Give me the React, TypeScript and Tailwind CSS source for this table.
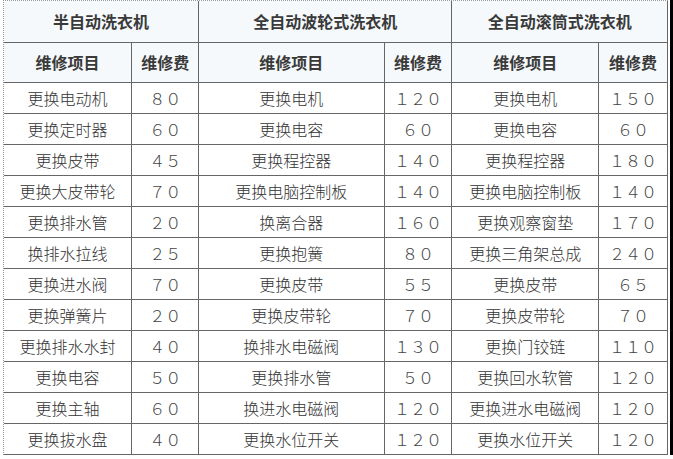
const groups = [
  {
    title: "半自动洗衣机",
    rows: [
      ["更换电动机", "８０"],
      ["更换定时器", "６０"],
      ["更换皮带", "４５"],
      ["更换大皮带轮", "７０"],
      ["更换排水管", "２０"],
      ["换排水拉线", "２５"],
      ["更换进水阀", "７０"],
      ["更换弹簧片", "２０"],
      ["更换排水水封", "４０"],
      ["更换电容", "５０"],
      ["更换主轴", "６０"],
      ["更换拔水盘", "４０"],
    ],
  },
  {
    title: "全自动波轮式洗衣机",
    rows: [
      ["更换电机", "１２０"],
      ["更换电容", "６０"],
      ["更换程控器", "１４０"],
      ["更换电脑控制板", "１４０"],
      ["换离合器", "１６０"],
      ["更换抱簧", "８０"],
      ["更换皮带", "５５"],
      ["更换皮带轮", "７０"],
      ["换排水电磁阀", "１３０"],
      ["更换排水管", "５０"],
      ["换进水电磁阀", "１２０"],
      ["更换水位开关", "１２０"],
    ],
  },
  {
    title: "全自动滚筒式洗衣机",
    rows: [
      ["更换电机", "１５０"],
      ["更换电容", "６０"],
      ["更换程控器", "１８０"],
      ["更换电脑控制板", "１４０"],
      ["更换观察窗垫", "１７０"],
      ["更换三角架总成", "２４０"],
      ["更换皮带", "６５"],
      ["更换皮带轮", "７０"],
      ["更换门铰链", "１１０"],
      ["更换回水软管", "１２０"],
      ["更换进水电磁阀", "１２０"],
      ["更换水位开关", "１２０"],
    ],
  },
]

const cell = "border-r border-b border-[#666] text-center p-0"

export default function App() {
  return (
    <div
      className="h-[459px] w-[673px] overflow-hidden bg-white text-[16px] text-[#333]"
      style={{ fontFamily: '"Noto Sans CJK SC", "Noto Sans", sans-serif' }}
    >
      <div className="ml-[3px] flex">
        <div className="border-l border-t border-dotted border-[#999]">
          <table className="border-collapse table-fixed">
            <colgroup>
              <col className="w-[128px]" />
              <col className="w-[67px]" />
              <col className="w-[186px]" />
              <col className="w-[68px]" />
              <col className="w-[147px]" />
              <col className="w-[69px]" />
            </colgroup>
            <thead>
              <tr className="h-[41px] bg-[#f5f9fb]">
                {groups.map((g) => (
                  <th key={g.title} colSpan={2} className={`${cell} font-bold text-[#3a3a3a]`}>
                    {g.title}
                  </th>
                ))}
              </tr>
              <tr className="h-[40px] bg-[#f5f9fb]">
                {groups.map((g) => (
                  <>
                    <th key={g.title + "a"} className={`${cell} font-bold text-[#3a3a3a]`}>维修项目</th>
                    <th key={g.title + "b"} className={`${cell} font-bold text-[#3a3a3a]`}>维修费</th>
                  </>
                ))}
              </tr>
            </thead>
            <tbody>
              {groups[0].rows.map((_, i) => (
                <tr key={i} className="h-[31px] font-light">
                  {groups.map((g) => (
                    <>
                      <td key={g.title + i + "a"} className={cell}>{g.rows[i][0]}</td>
                      <td key={g.title + i + "b"} className={`${cell} text-[#444]`}>{g.rows[i][1]}</td>
                    </>
                  ))}
                </tr>
              ))}
            </tbody>
          </table>
        </div>
        <div className="ml-[2px] w-[3px] bg-black" />
      </div>
    </div>
  )
}
